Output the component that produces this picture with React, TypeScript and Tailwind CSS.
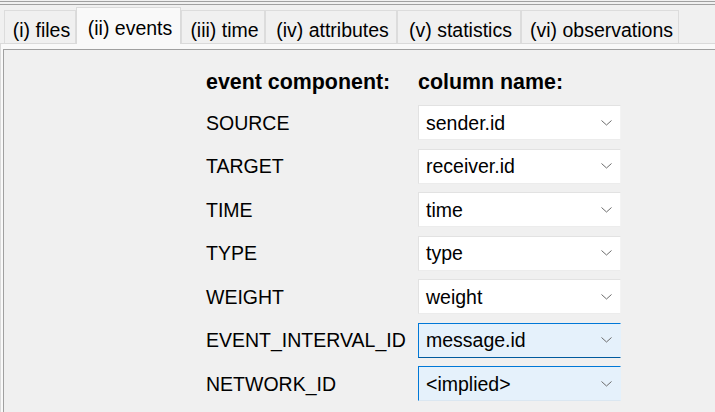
import React from 'react'

const tabs = [
  { label: '(i) files', w: 'w-[72px]' },
  { label: '(ii) events', w: 'w-[105px]', active: true },
  { label: '(iii) time', w: 'w-[84px]' },
  { label: '(iv) attributes', w: 'w-[132px]' },
  { label: '(v) statistics', w: 'w-[124px]' },
  { label: '(vi) observations', w: 'w-[158px]' },
]

type Row = { name: string; value: string; state?: 'focus' | 'hover' }

const rows: Row[] = [
  { name: 'SOURCE', value: 'sender.id' },
  { name: 'TARGET', value: 'receiver.id' },
  { name: 'TIME', value: 'time' },
  { name: 'TYPE', value: 'type' },
  { name: 'WEIGHT', value: 'weight' },
  { name: 'EVENT_INTERVAL_ID', value: 'message.id', state: 'focus' },
  { name: 'NETWORK_ID', value: '<implied>', state: 'hover' },
]

function Chevron() {
  return (
    <svg width="11" height="6" viewBox="0 0 11 6" className="shrink-0">
      <polyline points="0.5,0.5 5.5,5 10.5,0.5" fill="none" stroke="#6b6b6b" strokeWidth="1" />
    </svg>
  )
}

function Combo({ value, state }: { value: string; state?: Row['state'] }) {
  let cls = 'bg-white border border-[#e2e2e2] border-r-[#f3f3f3] border-b-[#ececec]'
  if (state === 'focus') cls = 'bg-[#e5f1fb] border border-[#0078d7] border-r-[#e5f1fb] border-b-[#005a9e]'
  if (state === 'hover') cls = 'bg-[#e5f1fb] border border-[#0078d7] border-r-[#e5f1fb] border-b-[#dbe7f1]'
  return (
    <div className={`w-[203px] h-[35px] flex items-center justify-between pl-[7px] pr-[8px] ${cls}`}>
      <span className="text-[19.5px] leading-none text-black pt-[2px]">{value}</span>
      <Chevron />
    </div>
  )
}

export default function App() {
  return (
    <div
      className="w-[715px] h-[412px] bg-[#f0f0f0] overflow-hidden"
      style={{ fontFamily: '"Liberation Sans", Arial, sans-serif' }}
    >
      {/* window edge lines */}
      <div className="h-[1px]" />
      <div className="h-[1px] bg-[#a0a0a0]" />
      <div className="h-[2px]" />
      <div className="h-[1px] bg-[#a0a0a0]" />

      {/* tab strip */}
      <div className="h-[38px] flex items-end pl-[4px]">
        {tabs.map(t =>
          t.active ? (
            <div
              key={t.label}
              className={`${t.w} h-[37px] mb-[-1px] relative z-10 bg-[#f9f9f9] border border-b-0 border-[#dadada] flex justify-center pt-[9px] pl-[3px] text-[19.5px] leading-[22px] text-black`}
            >
              {t.label}
            </div>
          ) : (
            <div
              key={t.label}
              className={`${t.w} h-[33px] bg-[#f0f0f0] border border-b-0 border-[#dcdcdc] flex justify-center pt-[8px] pl-[3px] text-[19.5px] leading-[22px] text-black`}
            >
              {t.label}
            </div>
          )
        )}
      </div>

      {/* tab page */}
      <div className="border-t border-l border-[#dadada] bg-[#f9f9f9] pt-[5px] pl-[2px] h-[369px]">
        <div className="border-t border-l border-[#a0a0a0] bg-[#f0f0f0] h-full pt-[20px] pl-[202px]">
          <div className="flex items-center h-[24px] font-bold text-[21.4px] leading-[24px] text-black">
            <div className="w-[212px]">event component:</div>
            <div>column name:</div>
          </div>
          <div className="flex flex-col gap-y-[8.5px] mt-[11px]">
            {rows.map(r => (
              <div key={r.name} className="flex items-center">
                <div className="w-[212px] text-[19.5px] leading-none text-black pt-[2px]">{r.name}</div>
                <Combo value={r.value} state={r.state} />
              </div>
            ))}
          </div>
        </div>
      </div>
    </div>
  )
}
